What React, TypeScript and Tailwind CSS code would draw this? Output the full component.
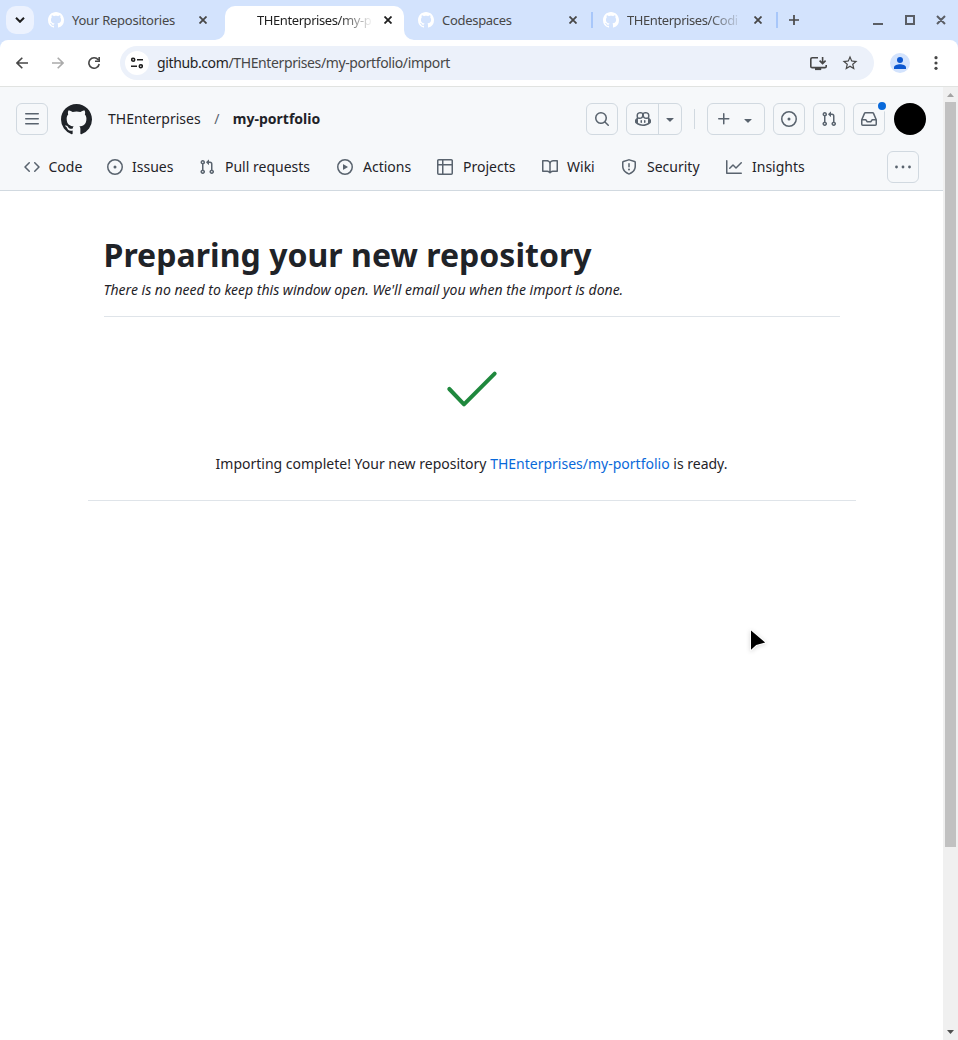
import type { ReactNode } from "react";

const paths = {
  bars: "M1 2.75A.75.75 0 0 1 1.75 2h12.5a.75.75 0 0 1 0 1.5H1.75A.75.75 0 0 1 1 2.75Zm0 5A.75.75 0 0 1 1.75 7h12.5a.75.75 0 0 1 0 1.5H1.75A.75.75 0 0 1 1 7.75ZM1.75 12h12.5a.75.75 0 0 1 0 1.5H1.75a.75.75 0 0 1 0-1.5Z",
  mark: "M8 0c4.42 0 8 3.58 8 8a8.013 8.013 0 0 1-5.45 7.59c-.4.08-.55-.17-.55-.38 0-.27.01-1.13.01-2.2 0-.75-.25-1.23-.54-1.48 1.78-.2 3.65-.88 3.65-3.95 0-.88-.31-1.59-.82-2.15.08-.2.36-1.02-.08-2.12 0 0-.67-.22-2.2.82-.64-.18-1.32-.27-2-.27-.68 0-1.36.09-2 .27-1.53-1.03-2.2-.82-2.2-.82-.44 1.1-.16 1.92-.08 2.12-.51.56-.82 1.28-.82 2.15 0 3.06 1.86 3.75 3.64 3.95-.23.2-.44.55-.51 1.07-.46.21-1.61.55-2.33-.66-.15-.24-.6-.83-1.23-.82-.67.01-.27.38.01.53.34.19.73.9.82 1.13.16.45.68 1.31 2.69.94 0 .67.01 1.3.01 1.49 0 .21-.15.45-.55.38A7.995 7.995 0 0 1 0 8c0-4.42 3.58-8 8-8Z",
  code: "m11.28 3.22 4.25 4.25a.75.75 0 0 1 0 1.06l-4.25 4.25a.749.749 0 0 1-1.275-.326.749.749 0 0 1 .215-.734L13.94 8l-3.72-3.72a.749.749 0 0 1 .326-1.275.749.749 0 0 1 .734.215Zm-6.56 0a.751.751 0 0 1 1.042.018.751.751 0 0 1 .018 1.042L2.06 8l3.72 3.72a.749.749 0 0 1-.326 1.275.749.749 0 0 1-.734-.215L.47 8.53a.75.75 0 0 1 0-1.06Z",
  issue: "M8 9.5a1.5 1.5 0 1 0 0-3 1.5 1.5 0 0 0 0 3ZM8 0a8 8 0 1 1 0 16A8 8 0 0 1 8 0ZM1.5 8a6.5 6.5 0 1 0 13 0 6.5 6.5 0 0 0-13 0Z",
  pull: "M1.5 3.25a2.25 2.25 0 1 1 3 2.122v5.256a2.251 2.251 0 1 1-1.5 0V5.372A2.25 2.25 0 0 1 1.5 3.25Zm5.677-.177L9.573.677A.25.25 0 0 1 10 .854V2.5h1A2.5 2.5 0 0 1 13.5 5v5.628a2.251 2.251 0 1 1-1.5 0V5a1 1 0 0 0-1-1h-1v1.646a.25.25 0 0 1-.427.177L7.177 3.427a.25.25 0 0 1 0-.354ZM3.75 2.5a.75.75 0 1 0 0 1.5.75.75 0 0 0 0-1.5Zm0 9.5a.75.75 0 1 0 0 1.5.75.75 0 0 0 0-1.5Zm8.25.75a.75.75 0 1 0 1.5 0 .75.75 0 0 0-1.5 0Z",
  play: "M8 0a8 8 0 1 1 0 16A8 8 0 0 1 8 0ZM1.5 8a6.5 6.5 0 1 0 13 0 6.5 6.5 0 0 0-13 0Zm4.879-2.773 4.264 2.559a.25.25 0 0 1 0 .428l-4.264 2.559A.25.25 0 0 1 6 10.559V5.442a.25.25 0 0 1 .379-.215Z",
  table: "M0 1.75C0 .784.784 0 1.75 0h12.5C15.216 0 16 .784 16 1.75v12.5A1.75 1.75 0 0 1 14.25 16H1.75A1.75 1.75 0 0 1 0 14.25ZM6.5 6.5v8h7.75a.25.25 0 0 0 .25-.25V6.5Zm8-1.5V1.75a.25.25 0 0 0-.25-.25H6.5V5Zm-13 1.5v7.75c0 .138.112.25.25.25H5v-8ZM5 5V1.5H1.75a.25.25 0 0 0-.25.25V5Z",
  book: "M0 1.75A.75.75 0 0 1 .75 1h4.253c1.227 0 2.317.59 3 1.501A3.743 3.743 0 0 1 11.006 1h4.245a.75.75 0 0 1 .75.75v10.5a.75.75 0 0 1-.75.75h-4.507a2.25 2.25 0 0 0-1.591.659l-.622.621a.75.75 0 0 1-1.06 0l-.622-.621A2.25 2.25 0 0 0 5.258 13H.75a.75.75 0 0 1-.75-.75Zm7.251 10.324.004-5.073-.002-2.253A2.25 2.25 0 0 0 5.003 2.5H1.5v9h3.757a3.75 3.75 0 0 1 1.994.574ZM8.755 4.75l-.004 7.322a3.752 3.752 0 0 1 1.992-.572H14.5v-9h-3.495a2.25 2.25 0 0 0-2.25 2.25Z",
  shield: "M7.467.133a1.748 1.748 0 0 1 1.066 0l5.25 1.68A1.75 1.75 0 0 1 15 3.48V7c0 1.566-.32 3.182-1.303 4.682-.983 1.498-2.585 2.813-5.032 3.855a1.697 1.697 0 0 1-1.33 0c-2.447-1.042-4.049-2.357-5.032-3.855C1.32 10.182 1 8.566 1 7V3.48a1.75 1.75 0 0 1 1.217-1.667Zm.61 1.429a.25.25 0 0 0-.153 0l-5.25 1.68a.25.25 0 0 0-.174.238V7c0 1.358.275 2.666 1.057 3.86.784 1.194 2.121 2.34 4.366 3.297a.196.196 0 0 0 .154 0c2.245-.956 3.582-2.104 4.366-3.298C13.225 9.666 13.5 8.36 13.5 7V3.48a.251.251 0 0 0-.174-.237l-5.25-1.68ZM8.75 4.75v3a.75.75 0 0 1-1.5 0v-3a.75.75 0 0 1 1.5 0ZM9 10.5a1 1 0 1 1-2 0 1 1 0 0 1 2 0Z",
  graph: "M1.5 1.75V13.5h13.75a.75.75 0 0 1 0 1.5H.75a.75.75 0 0 1-.75-.75V1.75a.75.75 0 0 1 1.5 0Zm14.28 2.53-5.25 5.25a.75.75 0 0 1-1.06 0L7 7.06 4.28 9.78a.751.751 0 0 1-1.042-.018.751.751 0 0 1-.018-1.042l3.25-3.25a.75.75 0 0 1 1.06 0L10 7.94l4.72-4.72a.751.751 0 0 1 1.042.018.751.751 0 0 1 .018 1.042Z",
  search: "M10.68 11.74a6 6 0 0 1-7.922-8.982 6 6 0 0 1 8.982 7.922l3.04 3.04a.749.749 0 0 1-.326 1.275.749.749 0 0 1-.734-.215ZM11.5 7a4.499 4.499 0 1 0-8.997 0A4.499 4.499 0 0 0 11.5 7Z",
  copilot: "M7.998 15.035c-4.562 0-7.873-2.914-7.998-3.749V9.338c.085-.628.677-1.686 1.588-2.065.013-.07.024-.143.036-.218.029-.183.06-.384.126-.612-.201-.508-.254-1.084-.254-1.656 0-.87.128-1.769.693-2.484.579-.733 1.494-1.124 2.724-1.261 1.206-.134 2.262.034 2.944.765.05.053.096.108.139.165.044-.057.094-.112.143-.165.682-.731 1.738-.899 2.944-.765 1.23.137 2.145.528 2.724 1.261.566.715.693 1.614.693 2.484 0 .572-.053 1.148-.254 1.656.066.228.098.429.126.612.012.076.024.148.037.218.924.385 1.522 1.471 1.591 2.095v1.872c0 .766-3.351 3.795-8.002 3.795Zm0-1.485c2.28 0 4.584-1.11 5.002-1.433V7.862l-.023-.116c-.49.21-1.075.291-1.727.291-1.146 0-2.059-.327-2.71-.991A3.222 3.222 0 0 1 8 6.303a3.24 3.24 0 0 1-.544.743c-.65.664-1.563.991-2.71.991-.652 0-1.236-.081-1.727-.291l-.023.116v4.255c.419.323 2.722 1.433 5.002 1.433ZM6.762 2.83c-.193-.206-.637-.413-1.682-.297-1.019.113-1.479.404-1.713.7-.247.312-.369.789-.369 1.554 0 .793.129 1.171.308 1.371.162.181.519.379 1.442.379.853 0 1.339-.235 1.638-.54.315-.322.527-.827.617-1.553.117-.935-.037-1.395-.241-1.614Zm4.155-.297c-1.044-.116-1.488.091-1.681.297-.204.219-.359.679-.242 1.614.091.726.303 1.231.618 1.553.299.305.784.54 1.638.54.922 0 1.28-.198 1.442-.379.179-.2.308-.578.308-1.371 0-.765-.123-1.242-.37-1.554-.233-.296-.693-.587-1.713-.7ZM6.25 9.037a.75.75 0 0 1 .75.75v1.501a.75.75 0 0 1-1.5 0V9.787a.75.75 0 0 1 .75-.75Zm4.25.75v1.501a.75.75 0 0 1-1.5 0V9.787a.75.75 0 0 1 1.5 0Z",
  caret: "m4.427 7.427 3.396 3.396a.25.25 0 0 0 .354 0l3.396-3.396A.25.25 0 0 0 11.396 7H4.604a.25.25 0 0 0-.177.427Z",
  plus: "M7.75 2a.75.75 0 0 1 .75.75V7h4.25a.75.75 0 0 1 0 1.5H8.5v4.25a.75.75 0 0 1-1.5 0V8.5H2.75a.75.75 0 0 1 0-1.5H7V2.75A.75.75 0 0 1 7.75 2Z",
  inbox: "M2.8 2.06A1.75 1.75 0 0 1 4.41 1h7.18c.7 0 1.333.417 1.61 1.06l2.74 6.395c.04.093.06.194.06.295v4.5A1.75 1.75 0 0 1 14.25 15H1.75A1.75 1.75 0 0 1 0 13.25v-4.5c0-.101.02-.202.06-.295Zm1.61.44a.25.25 0 0 0-.23.152L1.887 8H4.75a.75.75 0 0 1 .6.3L6.625 10h2.75l1.275-1.7a.75.75 0 0 1 .6-.3h2.863L11.82 2.652a.25.25 0 0 0-.23-.152Zm10.09 7h-2.875l-1.275 1.7a.75.75 0 0 1-.6.3h-3.5a.75.75 0 0 1-.6-.3L4.375 9.5H1.5v3.75c0 .138.112.25.25.25h12.5a.25.25 0 0 0 .25-.25Z",
  kebab: "M8 9.4a1.4 1.4 0 1 0 0-2.8 1.4 1.4 0 0 0 0 2.8ZM1.5 9.4a1.4 1.4 0 1 0 0-2.8 1.4 1.4 0 0 0 0 2.8Zm13 0a1.4 1.4 0 1 0 0-2.8 1.4 1.4 0 0 0 0 2.8Z",
};

type IconName = keyof typeof paths;

function Octicon({ name, className = "size-4" }: { name: IconName; className?: string }) {
  return (
    <svg viewBox="0 0 16 16" fill="currentColor" className={`shrink-0 ${className}`}>
      <path d={paths[name]} />
    </svg>
  );
}

function Close({ className }: { className: string }) {
  return (
    <svg viewBox="0 0 8 8" className={`size-2 shrink-0 ${className}`} stroke="currentColor" strokeWidth="1.8">
      <path d="M.5.5l7 7M7.5.5l-7 7" />
    </svg>
  );
}

function Tab({ title, className, titleClass }: { title: string; className: string; titleClass: string }) {
  return (
    <div className={`flex h-[34px] shrink-0 items-center text-[#474747] ${className}`}>
      <Octicon name="mark" className="mr-2 size-4 text-white" />
      <div className={`h-5 whitespace-nowrap leading-5 ${titleClass}`}>{title}</div>
      <Close className="ml-auto" />
    </div>
  );
}

function TabStrip() {
  return (
    <div className="relative flex h-10 bg-[#d3e3fd] pt-[3px] text-[13px]">
      <div className="ml-1.5 mt-[3px] flex h-7 w-7 shrink-0 items-center justify-center rounded-[10px] bg-[#ecf2fe]">
        <svg viewBox="0 0 10 6" className="h-1.5 w-[10px]" fill="none" stroke="#1f1f1f" strokeWidth="2">
          <path d="M1 .8l4 4 4-4" />
        </svg>
      </div>
      <Tab title="Your Repositories" className="ml-[14px] w-[159px]" titleClass="tracking-[-0.24px]" />
      <div className="relative ml-[18px] mt-[3px] flex h-[34px] w-[179px] shrink-0 items-center rounded-t-[10px] bg-white pb-[6px] pl-8 pr-3 text-[#1f1f1f]">
        <svg viewBox="0 0 10 10" className="absolute -left-[10px] bottom-0 size-[10px] fill-white">
          <path d="M10 0v10H0A10 10 0 0 0 10 0Z" />
        </svg>
        <svg viewBox="0 0 10 10" className="absolute -right-[10px] bottom-0 size-[10px] fill-white">
          <path d="M0 0v10h10A10 10 0 0 1 0 0Z" />
        </svg>
        <div className="h-5 w-[116px] whitespace-nowrap leading-5 tracking-[-0.42px] [mask-image:linear-gradient(to_right,black_70%,transparent)]">
          THEnterprises/my-p
        </div>
        <Close className="ml-auto" />
      </div>
      <Tab title="Codespaces" className="ml-[14px] w-[159px]" titleClass="tracking-[-0.3px]" />
      <div className="ml-[14px] mt-[9px] h-4 w-0.5 bg-[#a8c7fa]" />
      <Tab
        title="THEnterprises/Codi"
        className="ml-[10px] w-[159px]"
        titleClass="w-[116px] tracking-[-0.42px] [mask-image:linear-gradient(to_right,black_70%,transparent)]"
      />
      <div className="ml-[14px] mt-[9px] h-4 w-0.5 bg-[#a8c7fa]" />
      <svg viewBox="0 0 10 10" className="ml-[11px] mt-3 size-[10px] shrink-0" stroke="#474747" strokeWidth="1.7">
        <path d="M5 0v10M0 5h10" />
      </svg>
      <svg viewBox="0 0 76 12" className="ml-auto mr-3 mt-[11px] h-3 w-[76px] shrink-0" fill="none" stroke="#5a5e65" strokeWidth="2">
        <path d="M3 10h10M36 2h8v8h-8ZM67 2l8 8M75 2l-8 8" />
      </svg>
    </div>
  );
}

function Toolbar() {
  return (
    <div className="bg-[#d3e3fd]">
      <div className="flex h-[47px] items-center rounded-t-lg border-b border-[#e1e3e1] bg-white text-[#474747]">
        <svg viewBox="0 0 12 12" className="ml-4 size-3" fill="none" stroke="#474747" strokeWidth="1.6">
          <path d="M12 6H1M6.3.7L1 6l5.3 5.3" />
        </svg>
        <svg viewBox="0 0 12 12" className="ml-6 size-3" fill="none" stroke="#ababab" strokeWidth="1.6">
          <path d="M0 6h11M5.7.7L11 6l-5.3 5.3" />
        </svg>
        <svg viewBox="0 0 12 12" className="ml-6 size-3" fill="none" stroke="#474747" strokeWidth="1.6">
          <path d="M10.2 2.8A5.2 5.2 0 1 0 11.2 7M11.2 0v4.3H7" />
        </svg>
        <div className="ml-5 flex h-[34px] w-[754px] items-center rounded-full bg-[#ecf1fa] pl-[5px]">
          <div className="flex size-6 items-center justify-center rounded-full bg-white">
            <svg viewBox="0 0 12 12" className="size-3" fill="none" stroke="#1f1f1f" strokeWidth="1.6">
              <circle cx="2.2" cy="2.7" r="1.5" />
              <path d="M6 2.7h6M0 9.2h6" />
              <circle cx="9.8" cy="9.2" r="1.5" />
            </svg>
          </div>
          <div className="ml-2 whitespace-nowrap text-[14px] leading-5 tracking-[-0.38px]">
            <span className="text-[#1f1f1f]">github.com</span>/THEnterprises/my-portfolio/import
          </div>
          <svg viewBox="0 0 17 15" className="ml-auto h-[15px] w-[17px]" fill="none" stroke="#474747" strokeWidth="1.6">
            <path d="M8 1.8H2.2Q.8 1.8.8 3v7.4q0 1.2 1.4 1.2h12.6q1.4 0 1.4-1.2V9M12.6 1v6.3M9.6 4.7l3 2.9 3-2.9" />
            <path d="M5 13h6.2" strokeWidth="2.2" />
          </svg>
          <svg viewBox="0 0 24 24" className="ml-[14px] mr-[15px] size-[18px]" fill="#474747">
            <path d="M22 9.24l-7.19-.62L12 2 9.19 8.63 2 9.24l5.46 4.73L5.82 21 12 17.27 18.18 21l-1.63-7.03L22 9.24ZM12 15.4l-3.76 2.27 1-4.28-3.32-2.88 4.38-.38L12 6.1l1.71 4.04 4.38.38-3.32 2.88 1 4.28L12 15.4Z" />
          </svg>
        </div>
        <div className="ml-4 flex size-5 items-center justify-center rounded-full bg-[#d3e3fd]">
          <svg viewBox="0 0 12 12" className="size-3 fill-[#0b57d0]">
            <circle cx="6" cy="3" r="3" />
            <path d="M0 12v-1.7C0 8.3 3.5 7.2 6 7.2s6 1.1 6 3.1V12Z" />
          </svg>
        </div>
        <svg viewBox="0 0 4 14" className="ml-[24px] h-[14px] w-1 fill-[#474747]">
          <circle cx="2" cy="1.7" r="1.6" />
          <circle cx="2" cy="7" r="1.6" />
          <circle cx="2" cy="12.3" r="1.6" />
        </svg>
      </div>
    </div>
  );
}

function IconButton({ children, className = "w-8" }: { children: ReactNode; className?: string }) {
  return (
    <button className={`relative flex h-8 shrink-0 items-center justify-center rounded-md border border-[#d1d9e0] text-[#59636e] ${className}`}>
      {children}
    </button>
  );
}

const tabs: { name: IconName; label: string; width: string; gap: string }[] = [
  { name: "code", label: "Code", width: "w-[83px]", gap: "gap-[8.5px]" },
  { name: "issue", label: "Issues", width: "w-[92px]", gap: "gap-[9px]" },
  { name: "pull", label: "Pull requests", width: "w-[138px]", gap: "gap-[10px]" },
  { name: "play", label: "Actions", width: "w-[100px]", gap: "gap-[10px]" },
  { name: "table", label: "Projects", width: "w-[105px]", gap: "gap-[10px]" },
  { name: "book", label: "Wiki", width: "w-[79px]", gap: "gap-[9px]" },
  { name: "shield", label: "Security", width: "w-[105px]", gap: "gap-[10px]" },
  { name: "graph", label: "Insights", width: "w-[90px]", gap: "gap-[10px]" },
];

function RepoHeader() {
  return (
    <header className="h-[104px] border-b border-[#d1d9e0] bg-[#f6f8fa]">
      <div className="flex items-center pl-4 pt-4">
        <IconButton>
          <Octicon name="bars" />
        </IconButton>
        <Octicon name="mark" className="ml-[13px] size-[31px]" />
        <span className="ml-4">THEnterprises</span>
        <span className="ml-[13.5px] text-[#59636e]">/</span>
        <span className="ml-[13.5px] font-bold">my-portfolio</span>
        <div className="ml-auto flex items-center pr-[17px]">
          <IconButton>
            <Octicon name="search" />
          </IconButton>
          <IconButton className="ml-2 w-14">
            <span className="flex h-full w-8 items-center justify-center border-r border-[#d1d9e0]">
              <Octicon name="copilot" />
            </span>
            <span className="flex w-[22px] justify-center">
              <Octicon name="caret" />
            </span>
          </IconButton>
          <div className="ml-3 h-5 w-px bg-[#d1d9e0]" />
          <IconButton className="ml-3 w-[58px]">
            <Octicon name="plus" />
            <Octicon name="caret" className="ml-2 mt-0.5 size-4" />
          </IconButton>
          <IconButton className="ml-2 w-8">
            <Octicon name="issue" />
          </IconButton>
          <IconButton className="ml-2 w-8">
            <Octicon name="pull" />
          </IconButton>
          <IconButton className="ml-2 w-8">
            <Octicon name="inbox" />
            <span className="absolute -right-1 -top-1 size-3 rounded-full border-2 border-[#f6f8fa] bg-[#0969da]" />
          </IconButton>
          <div className="ml-[9px] size-8 rounded-full bg-black" />
        </div>
      </div>
      <nav className="mt-4 flex h-8 items-center pl-6">
        {tabs.map((t) => (
          <a key={t.label} className={`flex shrink-0 items-center whitespace-nowrap ${t.width} ${t.gap}`}>
            <Octicon name={t.name} className="size-4 text-[#59636e]" />
            {t.label}
          </a>
        ))}
        <IconButton className="ml-auto mr-6 w-8">
          <Octicon name="kebab" />
        </IconButton>
      </nav>
    </header>
  );
}

function Scrollbar() {
  return (
    <div className="flex w-[15px] shrink-0 flex-col items-center bg-[#f0f0f0]">
      <svg viewBox="0 0 15 15" className="size-[15px] fill-[#a3a3a3]">
        <path d="M4 10h7L7.5 6Z" />
      </svg>
      <div className="h-[745px] w-[11px] bg-[#c1c1c1]" />
      <svg viewBox="0 0 15 15" className="mt-auto size-[15px] fill-[#505050]">
        <path d="M4 5h7L7.5 9Z" />
      </svg>
    </div>
  );
}

export default function App() {
  return (
    <div className="relative flex h-[1040px] w-[958px] flex-col overflow-hidden bg-white font-['Noto_Sans',sans-serif] text-sm leading-5 text-[#1f2328]">
      <TabStrip />
      <Toolbar />
      <div className="flex min-h-0 flex-1">
        <div className="min-w-0 flex-1">
          <RepoHeader />
          <main className="mx-auto w-[768px] pt-10">
            <div className="mx-4 border-b border-[#d1d9e0]/70 pb-4">
              <h1 className="text-[32px] font-bold leading-[48px] tracking-[0.04px]">Preparing your new repository</h1>
              <p className="mt-px italic">There is no need to keep this window open. We'll email you when the import is done.</p>
            </div>
            <div className="flex flex-col items-center border-b border-[#d1d9e0]/70 pb-[26px] pt-10">
              <svg viewBox="0 0 24 24" className="size-16 fill-[#1f883d]">
                <path d="M21.03 5.72a.75.75 0 0 1 0 1.06l-11.5 11.5a.747.747 0 0 1-1.072-.012l-5.5-5.75a.75.75 0 1 1 1.084-1.036l4.97 5.195L19.97 5.72a.75.75 0 0 1 1.06 0Z" />
              </svg>
              <p className="mt-[33px]">
                Importing complete! Your new repository <a className="text-[#0969da]">THEnterprises/my-portfolio</a> is ready.
              </p>
            </div>
          </main>
        </div>
        <Scrollbar />
      </div>
      <svg viewBox="0 0 20 26" className="absolute left-[748px] top-[628px] h-[26px] w-5 drop-shadow-sm">
        <path d="M3 2.5v19.2l5.2-4.8 9-2.3Z" fill="black" stroke="white" strokeWidth="2" strokeLinejoin="round" paintOrder="stroke" />
      </svg>
    </div>
  );
}
